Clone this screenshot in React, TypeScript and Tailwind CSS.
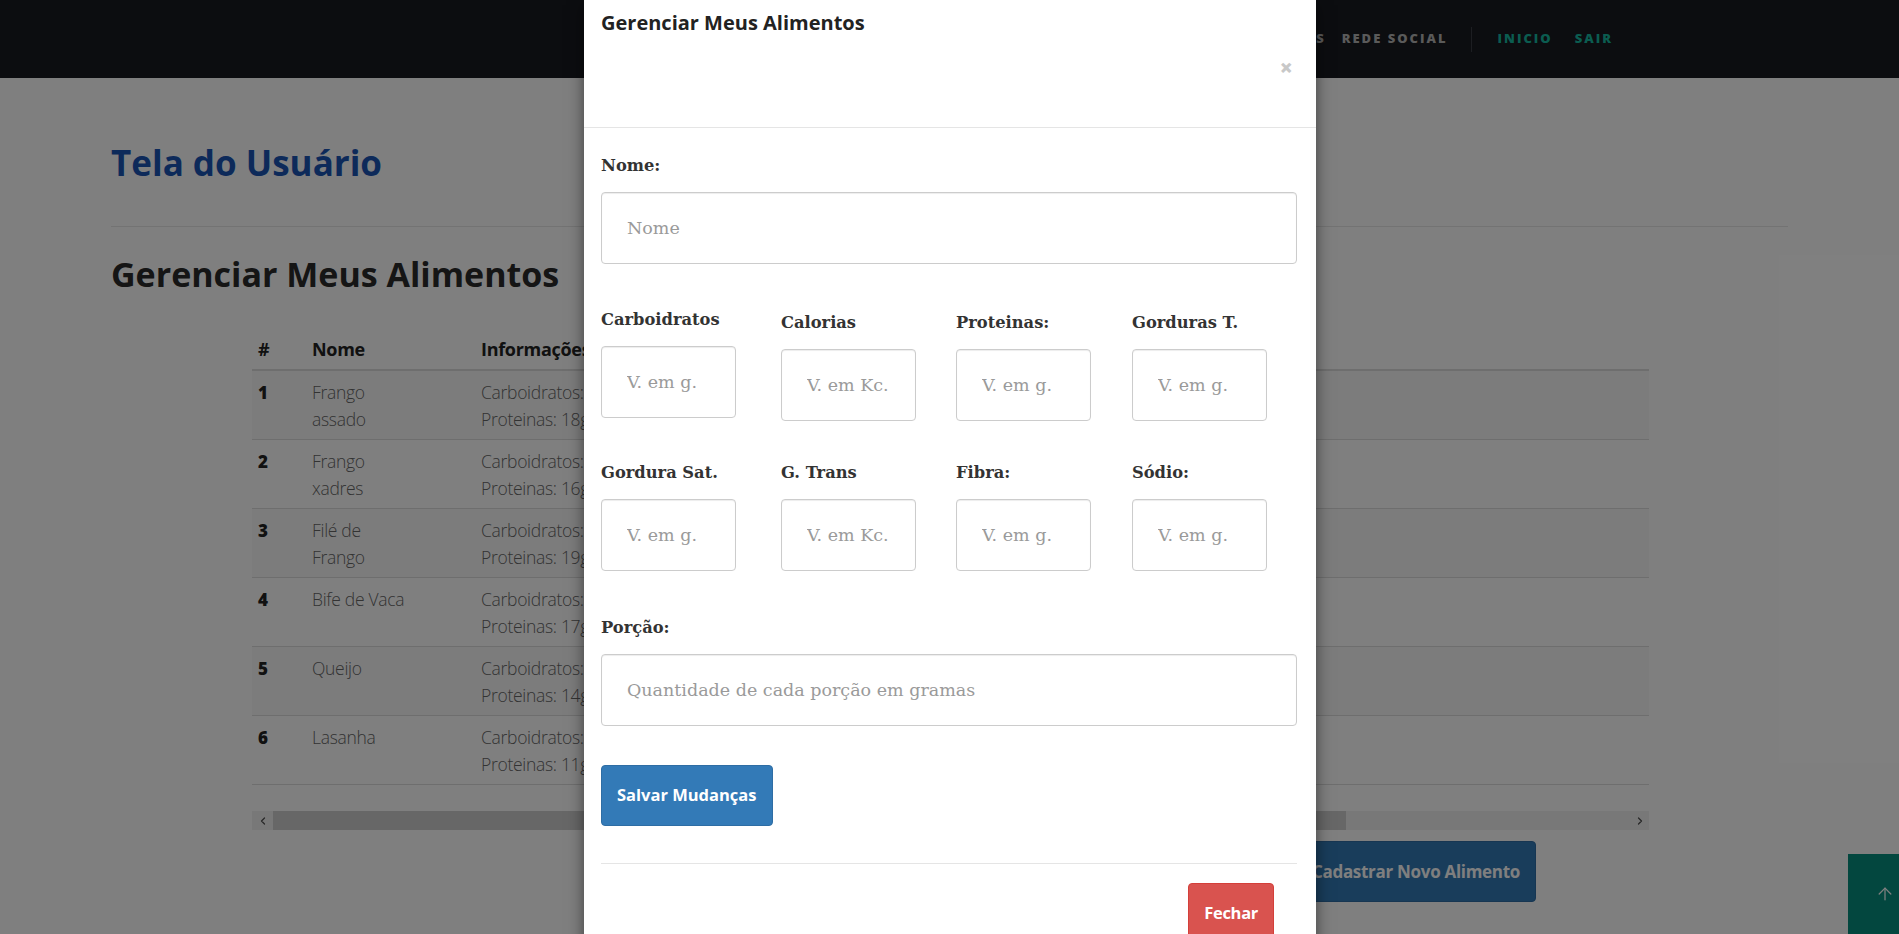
import { ArrowUp, ChevronLeft, ChevronRight } from 'lucide-react'

const foods = [
  { id: 1, name: ['Frango', 'assado'], carb: '0g', prot: '18g' },
  { id: 2, name: ['Frango', 'xadres'], carb: '9g', prot: '16g' },
  { id: 3, name: ['Filé de', 'Frango'], carb: '0g', prot: '19g' },
  { id: 4, name: ['Bife de Vaca'], carb: '0g', prot: '17g' },
  { id: 5, name: ['Queijo'], carb: '2g', prot: '14g' },
  { id: 6, name: ['Lasanha'], carb: '15g', prot: '11g' },
]

function Label({ children }: { children: React.ReactNode }) {
  return (
    <label className="block font-['DejaVu_Serif',serif] text-[16.3px] font-bold leading-[22px] text-[#333]">
      {children}
    </label>
  )
}

function Field({ placeholder, small }: { placeholder: string; small?: boolean }) {
  return (
    <input
      placeholder={placeholder}
      className={`mt-[15px] block h-[72px] rounded-[4px] border border-[#ccc] bg-white px-[25px] font-['DejaVu_Serif',serif] text-[17.5px] text-[#555] shadow-[inset_0_1px_1px_rgba(0,0,0,0.075)] outline-none placeholder:text-[#9a9a9a] ${
        small ? 'w-[135px]' : 'w-full'
      }`}
    />
  )
}

export default function App() {
  return (
    <div className="relative h-[934px] overflow-hidden bg-white font-['Open_Sans',sans-serif]">
      {/* Navbar */}
      <nav className="flex h-[78px] items-center justify-end bg-[#181a20] pr-[286px] text-[13px] font-extrabold uppercase tracking-[2px]">
        <a className="text-[#b4b4b4]">Alimentos</a>
        <a className="ml-[16px] text-[#b4b4b4]">Rede Social</a>
        <span className="ml-[23px] h-[25px] w-px bg-[#3a3d44]" />
        <a className="ml-[26px] text-[#16b9a1]">Inicio</a>
        <a className="ml-[22px] text-[#16b9a1]">Sair</a>
      </nav>

      <main className="px-[111px]">
        <h1 className="mt-[66px] text-[35px] font-bold leading-[38px] text-[#1a55b5]">Tela do Usuário</h1>
        <hr className="mt-[44px] border-t border-[#e6e6e6]" />
        <h2 className="mt-[29px] text-[34px] font-bold leading-[37px] text-[#2a2a2a]">Gerenciar Meus Alimentos</h2>

        <div className="ml-[141px] mt-[33px] w-[1397px]">
          {/* Table */}
          <div className="flex h-[45px] items-end border-b-2 border-[#ddd] pb-[6px] text-[18px] font-bold leading-[27px] tracking-[-0.3px] text-[#222]">
            <div className="w-[54px] pl-[6px]">#</div>
            <div className="w-[169px] pl-[6px]">Nome</div>
            <div className="flex-1 pl-[6px]">Informações</div>
          </div>
          {foods.map((f) => (
            <div
              key={f.id}
              className={`flex h-[69px] border-b border-[#ddd] pt-[8px] text-[17.5px] leading-[27px] ${
                f.id % 2 === 1 ? 'bg-[#f9f9f9]' : ''
              }`}
            >
              <div className="w-[54px] pl-[6px] text-[17px] font-extrabold text-[#222]">{f.id}</div>
              <div className="w-[169px] pl-[6px] font-light tracking-[-0.3px] text-[#666]">
                {f.name.map((n) => (
                  <div key={n}>{n}</div>
                ))}
              </div>
              <div className="flex-1 pl-[6px] font-light tracking-[-0.3px] text-[#666]">
                <div>Carboidratos: {f.carb}</div>
                <div>Proteinas: {f.prot}</div>
              </div>
            </div>
          ))}

          {/* horizontal scrollbar of the responsive table */}
          <div className="mt-[26px] flex h-[19px] items-center bg-[#f1f1f1]">
            <div className="flex w-[21px] justify-center text-[#505050]">
              <ChevronLeft size={12} strokeWidth={2.5} />
            </div>
            <div className="h-full w-[1073px] bg-[#cfcfcf]" />
            <div className="flex-1" />
            <div className="flex w-[19px] justify-center text-[#505050]">
              <ChevronRight size={12} strokeWidth={2.5} />
            </div>
          </div>

          <div className="mt-[11px] flex justify-end pr-[113px]">
            <button className="h-[61px] rounded-[4px] border border-[#2e6da4] bg-[#337ab7] px-[15px] text-[17px] font-bold tracking-[-0.3px] text-white">
              Cadastrar Novo Alimento
            </button>
          </div>
        </div>
      </main>

      <button className="absolute bottom-0 right-0 flex h-[80px] w-[51px] items-center bg-[#078e7f] pl-[27px] text-white">
        <ArrowUp size={20} strokeWidth={1.5} />
      </button>

      {/* Backdrop */}
      <div className="absolute inset-0 bg-black/50" />

      {/* Modal */}
      <div className="absolute left-[584px] top-0 w-[732px] bg-white shadow-[0_5px_15px_rgba(0,0,0,0.5)]">
        <div className="h-[128px] border-b border-[#e5e5e5] pl-[17px] pt-[11px]">
          <h4 className="text-[20px] font-bold leading-[24px] text-[#222]">Gerenciar Meus Alimentos</h4>
          <div className="mt-[21px] flex justify-end pr-[23px]">
            <button className="text-[23px] font-extrabold leading-none text-[#c8c8c8]">×</button>
          </div>
        </div>

        <div className="pl-[17px] pr-[19px] pt-[27px]">
          <Label>Nome:</Label>
          <Field placeholder="Nome" />

          <div className="mt-[45px] grid grid-cols-[180px_175px_176px_135px]">
            <div>
              <Label>Carboidratos</Label>
              <Field small placeholder="V. em g." />
            </div>
            <div className="mt-[3px]">
              <Label>Calorias</Label>
              <Field small placeholder="V. em Kc." />
            </div>
            <div className="mt-[3px]">
              <Label>Proteinas:</Label>
              <Field small placeholder="V. em g." />
            </div>
            <div className="mt-[3px]">
              <Label>Gorduras T.</Label>
              <Field small placeholder="V. em g." />
            </div>
          </div>

          <div className="mt-[41px] grid grid-cols-[180px_175px_176px_135px]">
            <div>
              <Label>Gordura Sat.</Label>
              <Field small placeholder="V. em g." />
            </div>
            <div>
              <Label>G. Trans</Label>
              <Field small placeholder="V. em Kc." />
            </div>
            <div>
              <Label>Fibra:</Label>
              <Field small placeholder="V. em g." />
            </div>
            <div>
              <Label>Sódio:</Label>
              <Field small placeholder="V. em g." />
            </div>
          </div>

          <div className="mt-[46px]">
            <Label>Porção:</Label>
            <Field placeholder="Quantidade de cada porção em gramas" />
          </div>

          <button className="mt-[39px] h-[61px] rounded-[4px] border border-[#2e6da4] bg-[#337ab7] px-[15px] text-[16.5px] font-bold text-white">
            Salvar Mudanças
          </button>

          <hr className="mt-[37px] border-t border-[#e5e5e5]" />

          <div className="mt-[19px] flex justify-end pb-[20px] pr-[23px]">
            <button className="h-[61px] rounded-[4px] border border-[#d43f3a] bg-[#d9534f] px-[15px] text-[16.5px] font-bold tracking-[-0.3px] text-white">
              Fechar
            </button>
          </div>
        </div>
      </div>
    </div>
  )
}
